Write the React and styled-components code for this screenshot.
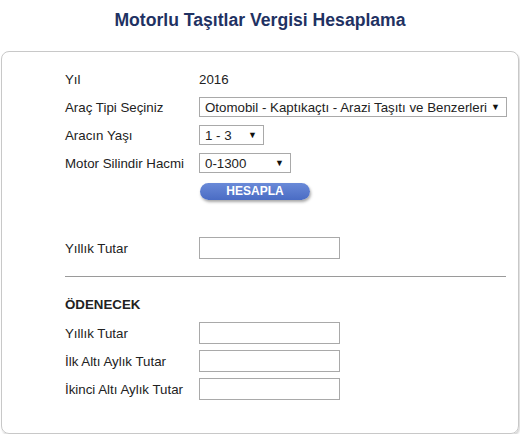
import styled, { createGlobalStyle } from "styled-components";

const GlobalStyle = createGlobalStyle`
    body {
        margin: 0;
        background: #fff;
        font-family: "Liberation Sans", Arial, sans-serif;
        font-size: 13.3px;
        color: #222;
    }
`;

const Page = styled.div`
    width: 520px;
    padding: 0 1px;
    box-sizing: border-box;
`;

const Title = styled.h1`
    margin: 0;
    height: 51px;
    line-height: 40px;
    text-align: center;
    font-size: 17.6px;
    font-weight: bold;
    color: #1f3263;
`;

const Card = styled.div`
    border: 1px solid #c8c8c8;
    border-radius: 8px;
    box-shadow: 1px 2px 2px rgba(0, 0, 0, 0.16);
    padding: 13px 12px 30px 63px;
    min-height: 379px;
    box-sizing: border-box;
`;

const FormGrid = styled.div`
    display: grid;
    grid-template-columns: 134px 1fr;
    grid-auto-rows: ${p => p.$row || 28}px;
    align-items: center;
`;

const Label = styled.div`
    font-weight: ${p => (p.$bold ? "bold" : "normal")};
    white-space: nowrap;
`;

const Value = styled.div``;

const SelectBox = styled.div`
    display: flex;
    align-items: center;
    justify-content: space-between;
    width: ${p => p.$width}px;
    height: 20px;
    box-sizing: border-box;
    border: 1px solid #a9a9a9;
    padding: 0 6px 0 5px;
    background: #fff;
    white-space: nowrap;
`;

const Arrow = styled.span`
    font-size: 9px;
    color: #111;
`;

const Button = styled.button`
    width: 110px;
    height: 17px;
    margin-left: 1px;
    border: none;
    border-radius: 9px;
    background: linear-gradient(#6a8ad8, #4a6cc4);
    box-shadow: 1px 2px 3px rgba(0, 0, 0, 0.35);
    color: #fff;
    font-family: "Liberation Sans", Arial, sans-serif;
    font-size: 12px;
    font-weight: bold;
    padding: 0;
`;

const Spacer = styled.div`
    height: ${p => p.$h}px;
`;

const Input = styled.input`
    width: 141px;
    height: 22px;
    box-sizing: border-box;
    border: 1px solid #a9a9a9;
    padding: 0 4px;
    font-family: inherit;
`;

const Divider = styled.hr`
    margin: 14px 0 0 0;
    border: none;
    border-top: 1px solid #9a9a9a;
    height: 0;
`;

function App() {
    return (
        <Page>
            <GlobalStyle/>
            <Title>Motorlu Taşıtlar Vergisi Hesaplama</Title>
            <Card>
                <FormGrid>
                    <Label>Yıl</Label>
                    <Value>2016</Value>
                    <Label>Araç Tipi Seçiniz</Label>
                    <SelectBox $width={308}>Otomobil - Kaptıkaçtı - Arazi Taşıtı ve Benzerleri<Arrow>▼</Arrow></SelectBox>
                    <Label>Aracın Yaşı</Label>
                    <SelectBox $width={65}>1 - 3<Arrow>▼</Arrow></SelectBox>
                    <Label>Motor Silindir Hacmi</Label>
                    <SelectBox $width={92}>0-1300<Arrow>▼</Arrow></SelectBox>
                    <Label/>
                    <Value><Button>HESAPLA</Button></Value>
                </FormGrid>
                <Spacer $h={29}/>
                <FormGrid>
                    <Label>Yıllık Tutar</Label>
                    <Input/>
                </FormGrid>
                <Divider/>
                <Spacer $h={13}/>
                <FormGrid $row={29}>
                    <Label $bold>ÖDENECEK</Label>
                    <Value/>
                </FormGrid>
                <FormGrid>
                    <Label>Yıllık Tutar</Label>
                    <Input/>
                    <Label>İlk Altı Aylık Tutar</Label>
                    <Input/>
                    <Label>İkinci Altı Aylık Tutar</Label>
                    <Input/>
                </FormGrid>
            </Card>
        </Page>
    );
}

export default App
